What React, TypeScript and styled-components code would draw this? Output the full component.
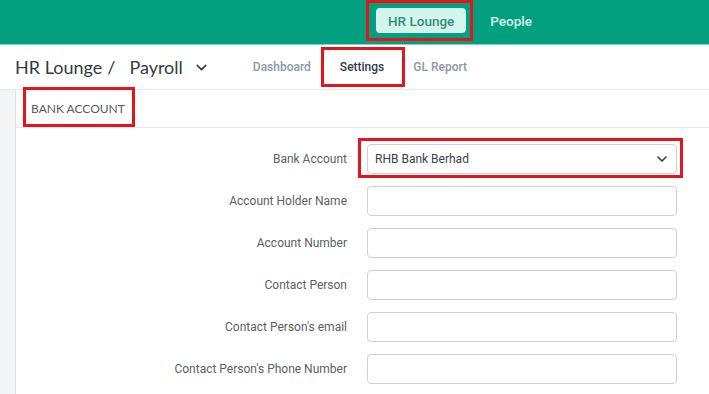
import React from 'react'
import styled, { createGlobalStyle } from 'styled-components'
import { ChevronDown } from 'lucide-react'

const GlobalStyle = createGlobalStyle`
  html, body {
    margin: 0;
    padding: 0;
    background: #ffffff;
  }
  body {
    font-family: Roboto, 'Liberation Sans', sans-serif;
    overflow: hidden;
  }
`

type Inset = { t: number; r: number; b: number; l: number }

// red annotation frame drawn over the element it marks
const Marked = styled.span<{ $inset: Inset }>`
  position: relative;
  display: inline-flex;
  align-items: center;

  &::after {
    content: '';
    position: absolute;
    top: ${({ $inset }) => -$inset.t}px;
    right: ${({ $inset }) => -$inset.r}px;
    bottom: ${({ $inset }) => -$inset.b}px;
    left: ${({ $inset }) => -$inset.l}px;
    border: 3px solid #e3161d;
    pointer-events: none;
  }
`

const TopBar = styled.header`
  height: 36px;
  background: #02a07f;
  border-bottom: 1px solid #7fd3bf;
  display: flex;
  align-items: flex-start;
  padding: 8px 0 0 376px;
  gap: 12px;
  box-sizing: content-box;
`

const NavPill = styled.span<{ $active?: boolean }>`
  display: inline-flex;
  align-items: center;
  height: 25px;
  padding: 0 12px;
  border-radius: 4px;
  font-size: 13.5px;
  font-weight: 500;
  color: ${({ $active }) => ($active ? '#2f8f78' : '#d8f6ee')};
  background: ${({ $active }) => ($active ? '#d3f5ed' : 'transparent')};
`

const SubBar = styled.div`
  height: 44px;
  display: flex;
  align-items: center;
  padding-left: 15px;
  border-bottom: 1px solid #e7e9ec;
`

const Crumbs = styled.div`
  display: flex;
  align-items: center;
  font-family: Lato, 'Open Sans', sans-serif;
  font-size: 18px;
  color: #343a40;
  margin-right: 43px;
`

const Slash = styled.span`
  margin: 0 14px 0 5px;
`

const Caret = styled(ChevronDown)`
  margin-left: 10px;
  color: #343a40;
`

const Tabs = styled.nav`
  display: flex;
  align-items: center;
  gap: 29px;
`

const Tab = styled.span<{ $active?: boolean }>`
  font-size: 12px;
  font-weight: 500;
  color: ${({ $active }) => ($active ? '#333d48' : '#8c98a5')};
`

const Body = styled.div`
  display: flex;
  min-height: 310px;
`

const SideStrip = styled.div`
  width: 15px;
  background: #f3f5f7;
  border-right: 1px solid #e2e5e8;
  flex-shrink: 0;
`

const Content = styled.main`
  flex: 1;
`

const SectionHead = styled.div`
  height: 37px;
  display: flex;
  align-items: center;
  padding-left: 15px;
  border-bottom: 1px solid #e6e8eb;
  font-family: Lato, 'Open Sans', sans-serif;
  font-size: 12px;
  color: #555b61;
`

const Form = styled.div`
  display: grid;
  grid-template-columns: 331px 310px;
  column-gap: 20px;
  row-gap: 12px;
  padding-top: 16px;
`

const Label = styled.label`
  font-size: 12px;
  color: #5b5f63;
  text-align: right;
  align-self: center;
`

const Field = styled.div`
  height: 28px;
  border: 1px solid #c9d1dc;
  border-radius: 4px;
  background: #fff;
  display: flex;
  align-items: center;
  justify-content: space-between;
  padding: 0 6px 0 7px;
  font-size: 12px;
  color: #39424c;
`

const SelectCaret = styled(ChevronDown)`
  color: #2e3a4a;
`

const rows = [
  'Account Holder Name',
  'Account Number',
  'Contact Person',
  "Contact Person's email",
  "Contact Person's Phone Number",
]

export default function App() {
  return (
    <>
      <GlobalStyle />
      <TopBar>
        <Marked $inset={{ t: 8, r: 7, b: 8, l: 10 }}>
          <NavPill $active>HR Lounge</NavPill>
        </Marked>
        <NavPill>People</NavPill>
      </TopBar>
      <SubBar>
        <Crumbs>
          HR Lounge
          <Slash>/</Slash>
          Payroll
          <Caret size={17} strokeWidth={2.2} />
        </Crumbs>
        <Tabs>
          <Tab>Dashboard</Tab>
          <Marked $inset={{ t: 13, r: 21, b: 13, l: 19 }}>
            <Tab $active>Settings</Tab>
          </Marked>
          <Tab>GL Report</Tab>
        </Tabs>
      </SubBar>
      <Body>
        <SideStrip />
        <Content>
          <SectionHead>
            <Marked $inset={{ t: 14, r: 10, b: 11, l: 8 }}>BANK ACCOUNT</Marked>
          </SectionHead>
          <Form>
            <Label>Bank Account</Label>
            <Marked $inset={{ t: 6, r: 6, b: 4, l: 9 }} style={{ display: 'block' }}>
              <Field>
                RHB Bank Berhad
                <SelectCaret size={16} strokeWidth={2.4} />
              </Field>
            </Marked>
            {rows.map((r) => (
              <React.Fragment key={r}>
                <Label>{r}</Label>
                <Field />
              </React.Fragment>
            ))}
          </Form>
        </Content>
      </Body>
    </>
  )
}
